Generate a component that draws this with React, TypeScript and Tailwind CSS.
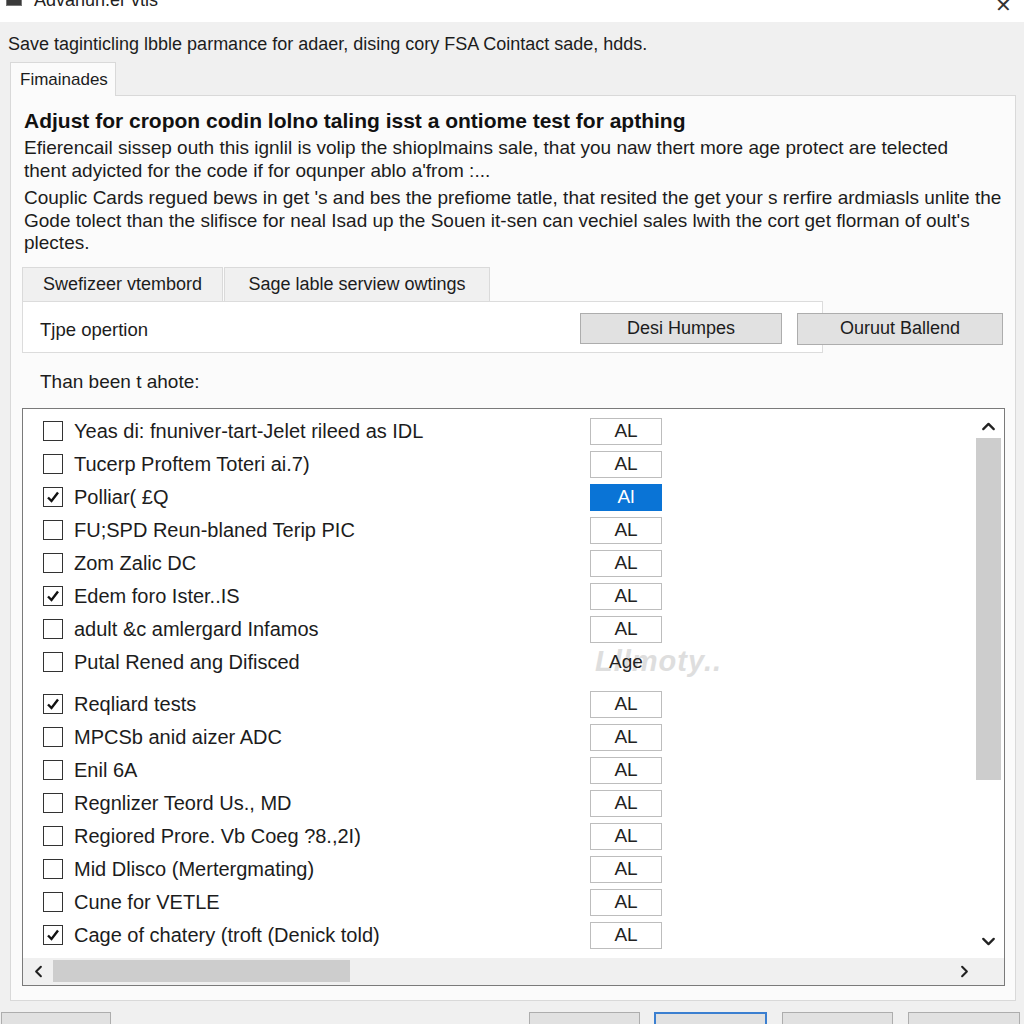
import { ChevronUp, ChevronDown, ChevronLeft, ChevronRight } from "lucide-react";

type Row = { label: string; checked: boolean; value: string; selected?: boolean; plain?: boolean };

const rows: Row[] = [
  { label: "Yeas di: fnuniver-tart-Jelet rileed as IDL", checked: false, value: "AL" },
  { label: "Tucerp Proftem Toteri ai.7)", checked: false, value: "AL" },
  { label: "Polliar( £Q", checked: true, value: "Al", selected: true },
  { label: "FU;SPD Reun-blaned Terip PIC", checked: false, value: "AL" },
  { label: "Zom Zalic DC", checked: false, value: "AL" },
  { label: "Edem foro Ister..IS", checked: true, value: "AL" },
  { label: "adult &c amlergard Infamos", checked: false, value: "AL" },
  { label: "Putal Rened ang Difisced", checked: false, value: "Age", plain: true },
];

const rows2: Row[] = [
  { label: "Reqliard tests", checked: true, value: "AL" },
  { label: "MPCSb anid aizer ADC", checked: false, value: "AL" },
  { label: "Enil 6A", checked: false, value: "AL" },
  { label: "Regnlizer Teord Us., MD", checked: false, value: "AL" },
  { label: "Regiored Prore. Vb Coeg ?8.,2I)", checked: false, value: "AL" },
  { label: "Mid Dlisco (Mertergmating)", checked: false, value: "AL" },
  { label: "Cune for VETLE", checked: false, value: "AL" },
  { label: "Cage of chatery (troft (Denick told)", checked: true, value: "AL" },
];

function CheckRow({ row }: { row: Row }) {
  return (
    <div className="h-[33px] flex items-center">
      <div className="ml-[20px] w-[20px] h-[20px] border border-[#333] bg-white flex items-center justify-center">
        {row.checked && (
          <svg width="14" height="14" viewBox="0 0 14 14">
            <path d="M2 7.5 L5.5 11 L12 2.5" fill="none" stroke="#111" strokeWidth="2.4" />
          </svg>
        )}
      </div>
      <span className="ml-[11px] w-[516px] text-[20px] text-[#1c1c1c] whitespace-nowrap">{row.label}</span>
      {row.plain ? (
        <div className="w-[72px] text-center text-[19px] text-[#222] relative z-10">{row.value}</div>
      ) : (
        <div
          className={
            row.selected
              ? "w-[72px] h-[27px] flex items-center justify-center bg-[#0a74d6] border border-[#0a74d6] text-white text-[19px]"
              : "w-[72px] h-[27px] flex items-center justify-center bg-white border border-[#bdbdbd] text-[#222] text-[19px]"
          }
        >
          {row.value}
        </div>
      )}
    </div>
  );
}

export default function App() {
  return (
    <div className="w-[1024px] h-[1024px] bg-[#f0f0f0] overflow-hidden relative font-['Liberation_Sans',Arial,sans-serif] text-[#1c1c1c]">
      {/* title bar */}
      <div className="h-[22px] bg-white overflow-hidden relative">
        <div className="absolute left-[6px] top-[-8px] w-[16px] h-[14px] bg-[#3a3a3a] border border-[#777]" />
        <span className="absolute left-[34px] top-[-13px] text-[18px] text-[#222]">Advanun.er vtis</span>
        <span className="absolute left-[995px] top-[-10px] text-[20px] font-light text-[#333]">✕</span>
      </div>

      <div className="px-[8px] pt-[11px] text-[18px] leading-[22px] whitespace-nowrap">
        Save taginticling lbble parmance for adaer, dising cory FSA Cointact sade, hdds.
      </div>

      {/* outer tab */}
      <div className="ml-[10px] mt-[7px] w-[106px] h-[34px] bg-[#fbfbfb] border border-b-0 border-[#d9d9d9] flex items-center pl-[9px] text-[17px] relative z-10">
        Fimainades
      </div>
      <div className="ml-[10px] mr-[8px] -mt-px h-[906px] bg-[#fbfbfb] border border-[#d9d9d9] relative">
        <div className="pl-[13px] pt-[12px] text-[21px] font-bold leading-[26px] text-[#111] whitespace-nowrap">
          Adjust for cropon codin lolno taling isst a ontiome test for apthing
        </div>
        <div className="pl-[13px] mt-[2px] text-[19px] leading-[23px] whitespace-nowrap">
          Efierencail sissep outh this ignlil is volip the shioplmains sale, that you naw thert more age protect are telected
          <br />
          thent adyicted for the code if for oqunper ablo a'from :...
        </div>
        <div className="pl-[13px] mt-[5px] text-[19px] leading-[22.5px] whitespace-nowrap">
          Couplic Cards regued bews in get 's and bes the prefiome tatle, that resited the get your s rerfire ardmiasls unlite the
          <br />
          Gode tolect than the slifisce for neal Isad up the Souen it-sen can vechiel sales lwith the cort get florman of oult's
          <br />
          plectes.
        </div>

        {/* inner tabs */}
        <div className="ml-[11px] mt-[12px] flex">
          <div className="w-[201px] h-[34px] bg-[#f0f0f0] border border-b-0 border-[#dadada] flex items-center justify-center text-[18px]">
            Swefizeer vtembord
          </div>
          <div className="ml-[1px] w-[266px] h-[34px] bg-[#f0f0f0] border border-b-0 border-[#dadada] flex items-center justify-center text-[18px]">
            Sage lable serview owtings
          </div>
        </div>
        <div className="ml-[11px] relative">
          <div className="w-[801px] h-[52px] bg-white border border-[#dcdcdc] flex items-end pb-[8px] pl-[17px] text-[18.5px]">
            Tjpe opertion
          </div>
          <div className="absolute left-[558px] top-[12px] flex gap-[15px]">
            <div className="w-[202px] h-[31px] bg-[#e1e1e1] border border-[#adadad] flex items-center justify-center text-[18px]">
              Desi Humpes
            </div>
            <div className="w-[206px] h-[32px] bg-[#e1e1e1] border border-[#adadad] flex items-center justify-center text-[18px]">
              Ouruut Ballend
            </div>
          </div>
        </div>

        <div className="pl-[29px] mt-[18px] text-[19px] leading-[22px]">Than been t ahote:</div>

        {/* list box */}
        <div className="ml-[11px] mt-[15px] w-[983px] h-[578px] border border-[#7a7a7a] bg-white flex flex-col">
          <div className="flex flex-1 min-h-0">
            <div className="flex-1 pt-[6px] relative">
              {rows.map((r, i) => (
                <CheckRow key={i} row={r} />
              ))}
              <div className="mt-[9px]">
                {rows2.map((r, i) => (
                  <CheckRow key={i} row={r} />
                ))}
              </div>
              <span className="absolute left-[572px] top-[231px] text-[29px] font-bold italic text-[#dedede] tracking-[1px] pointer-events-none">
                Lllmoty..
              </span>
            </div>
            <div className="w-[25px] mr-[3px] flex flex-col items-center bg-white">
              <ChevronUp className="mt-[7px] w-[21px] h-[21px] text-[#222]" strokeWidth={2.6} />
              <div className="mt-[1px] w-[25px] h-[342px] bg-[#cdcdcd]" />
              <div className="flex-1" />
              <ChevronDown className="mb-[6px] w-[21px] h-[21px] text-[#222]" strokeWidth={2.6} />
            </div>
          </div>
          <div className="h-[27px] bg-[#f0f0f0] flex items-center">
            <ChevronLeft className="ml-[6px] w-[19px] h-[19px] text-[#222]" strokeWidth={2.6} />
            <div className="ml-[5px] w-[297px] h-[22px] bg-[#cdcdcd]" />
            <div className="flex-1" />
            <ChevronRight className="mr-[30px] w-[19px] h-[19px] text-[#222]" strokeWidth={2.6} />
          </div>
        </div>
      </div>

      {/* bottom buttons */}
      <div className="absolute left-0 top-[1012px] w-[1024px] flex">
        <div className="ml-[1px] w-[110px] h-[30px] bg-[#e1e1e1] border border-[#adadad] text-center text-[18px] pt-[6px]">
          Nieuw
        </div>
        <div className="ml-[418px] w-[111px] h-[30px] bg-[#e1e1e1] border border-[#adadad] text-center text-[18px] pt-[6px]">
          Annuler
        </div>
        <div className="ml-[14px] w-[113px] h-[30px] bg-[#e1e1e1] border-2 border-[#3b7fd0] text-center text-[18px] pt-[5px]">
          Gebruik
        </div>
        <div className="ml-[15px] w-[111px] h-[30px] bg-[#e1e1e1] border border-[#adadad] text-center text-[18px] pt-[6px]">
          Instellen
        </div>
        <div className="ml-[15px] w-[112px] h-[30px] bg-[#e1e1e1] border border-[#adadad] text-center text-[18px] pt-[6px]">
          Sluiten
        </div>
      </div>
    </div>
  );
}
